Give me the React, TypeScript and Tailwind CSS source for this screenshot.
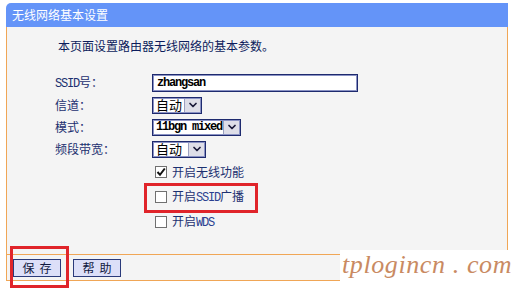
import { ChevronDown } from "lucide-react";

const cjk = "font-['Noto_Sans_CJK_SC',sans-serif]";
const mono = "font-['Liberation_Mono','Noto_Sans_CJK_SC',monospace]";

function Select({ text, textW, isMono }: { text: string; textW: number; isMono?: boolean }) {
  return (
    <div className="flex h-[17px] border border-[#1e2a6e] shadow-[inset_0_0_0_1px_#8a92c4] bg-white">
      <div
        className={`flex items-center pl-[3px] text-black ${isMono ? mono + " text-[12px] tracking-[-1.2px] font-semibold" : cjk + " text-[13px]"}`}
        style={{ width: textW }}
      >
        {text}
      </div>
      <div className="flex w-[16px] items-center justify-center bg-[#dedee8] border-l border-[#9aa0c0] m-[1px] ml-0">
        <ChevronDown size={12} strokeWidth={3.5} className="text-[#1a1a3a]" />
      </div>
    </div>
  );
}

function Row({ label, children }: { label: React.ReactNode; children: React.ReactNode }) {
  return (
    <div className="flex h-[22px] items-center pl-[48px]">
      <div className={`w-[97px] text-[12px] leading-none text-[#1c3070] ${cjk}`}>{label}</div>
      {children}
    </div>
  );
}

function Check({ checked, children }: { checked?: boolean; children: React.ReactNode }) {
  return (
    <div className="flex items-center pl-[148px]">
      <div className="flex h-[12px] w-[12px] items-center justify-center border border-[#707070] bg-white">
        {checked && (
          <svg width="10" height="10" viewBox="0 0 10 10">
            <path d="M1.5 5 L4 7.8 L8.8 1.5" fill="none" stroke="#111" strokeWidth="2" />
          </svg>
        )}
      </div>
      <div className={`ml-[5px] text-[12px] leading-none text-[#1c3070] ${cjk}`}>{children}</div>
    </div>
  );
}

export default function App() {
  return (
    <div className="relative h-[290px] w-[516px] overflow-hidden bg-white">
      <div className="ml-[6px] w-[502px] pt-[3px]">
        <div className={`flex h-[24px] items-center rounded-tl-[5px] bg-[#6494f8] pl-[6px] text-[12px] text-white ${cjk}`}>
          无线网络基本设置
        </div>
        <div className="h-[227px] border-x border-[#f0a656] bg-[#f4f4f4] pt-[11px]">
          <div className={`ml-[51px] h-[16px] text-[12px] leading-[16px] text-[#0c1c5c] ${cjk}`}>
            本页面设置路由器无线网络的基本参数。
          </div>
          <div className="mt-[18px]">
            <Row
              label={
                <>
                  <span className={`${mono} text-[12px] tracking-[-1.2px]`}>SSID</span>号：
                </>
              }
            >
              <div className={`flex h-[18px] w-[206px] items-center border border-[#1e2a6e] shadow-[inset_0_0_0_1px_#8a92c4] bg-white pl-[4px] text-[12px] tracking-[-1.2px] font-semibold text-black ${mono}`}>
                zhangsan
              </div>
            </Row>
            <Row label="信道：">
              <Select text="自动" textW={31} />
            </Row>
            <Row label="模式：">
              <Select text="11bgn mixed" textW={70} isMono />
            </Row>
            <Row label="频段带宽：">
              <Select text="自动" textW={35} />
            </Row>
          </div>
          <div className="mt-[6px] flex h-[12px] flex-col">
            <Check checked>开启无线功能</Check>
          </div>
          <div className="mt-[12px] flex h-[12px] flex-col">
            <Check>
              开启<span className={`${mono} text-[12px] tracking-[-1.2px] text-[#2a3f90]`}>SSID</span>广播
            </Check>
          </div>
          <div className="mt-[13px] flex h-[12px] flex-col">
            <Check>
              开启<span className={`${mono} text-[12px] tracking-[-1.2px] text-[#2a3f90]`}>WDS</span>
            </Check>
          </div>
        </div>
        <div className="flex h-[27px] items-center gap-[12px] border border-[#f0a656] bg-[#f4f4f4] pl-[6px]">
          <button className={`flex h-[18px] w-[48px] items-center justify-center border border-[#2a3a7a] bg-[#dcdff8] text-[12px] tracking-[5px] pl-[5px] text-[#101840] ${cjk}`}>
            保存
          </button>
          <button className={`flex h-[18px] w-[48px] items-center justify-center border border-[#2a3a7a] bg-[#dcdff8] text-[12px] tracking-[5px] pl-[5px] text-[#101840] ${cjk}`}>
            帮助
          </button>
        </div>
      </div>

      <div className="absolute left-[144px] top-[183px] h-[30px] w-[114px] border-[3px] border-[#e0242a]" />
      <div className="absolute left-[10px] top-[246px] h-[42px] w-[59px] border-[3px] border-[#e0242a]" />

      <div className="absolute left-[340px] top-[250px] flex h-[40px] w-[176px] items-start bg-white pl-[2px] pt-[2px]">
        <span className="font-['Liberation_Serif',serif] text-[26px] italic leading-none tracking-[0.6px] text-[#c98a62]">
          tplogincn . com
        </span>
      </div>
    </div>
  );
}
